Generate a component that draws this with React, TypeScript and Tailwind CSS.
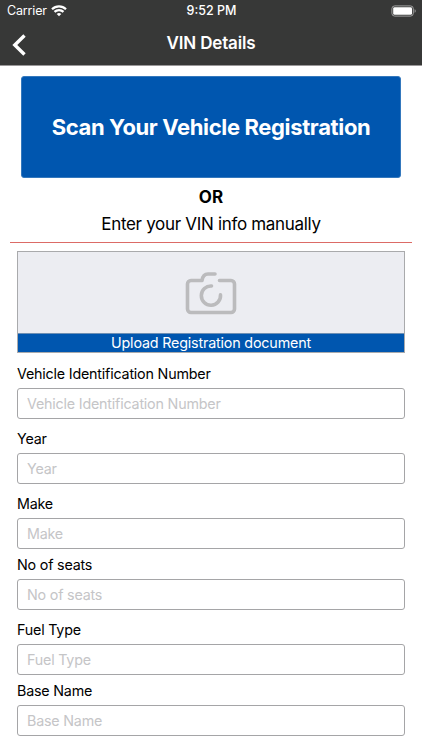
import React, { useState } from "react";
import clsx from "clsx";

type Field = {
    label: string;
    className: string;
};

const fields: Field[] = [
    { label: "Vehicle Identification Number", className: "mt-3" },
    { label: "Year", className: "mt-[11px]" },
    { label: "Make", className: "mt-[11px]" },
    { label: "No of seats", className: "mt-[7px]" },
    { label: "Fuel Type", className: "mt-[11px]" },
    { label: "Base Name", className: "mt-[7px]" },
];

function StatusBar() {
    return (
        <div className="grid h-[22px] grid-cols-3 items-center pr-[5px] pl-[7px] text-[12.5px] leading-4">
            <div className="flex items-center gap-1">
                <span className="-tracking-[0.15px]">Carrier</span>
                <svg width="16" height="12" viewBox="0 0 16 12" fill="none" stroke="currentColor" strokeWidth="2.200">
                    <path d="M1 4.2a10 10 0 0 1 14 0" />
                    <path d="M3.5 6.9a6.4 6.4 0 0 1 9 0" />
                    <path d="M8 11.3 5.7 9a3.3 3.3 0 0 1 4.600 0Z" fill="currentColor" stroke="none" />
                </svg>
            </div>
            <span className="pr-px text-center font-medium">9:52 PM</span>
            <div className="flex justify-end">
                <svg width="26" height="12" viewBox="0 0 26 12" fill="none">
                    <rect x="0.9" y="0.9" width="21.4" height="10.2" rx="2.8" stroke="#a0a0a0" />
                    <rect x="2.2" y="2.200" width="18.8" height="7.6" rx="1.4" fill="white" />
                    <path d="M23.6 4.2v3.6c.7-.3 1.1-1 1.1-1.8s-.4-1.5-1.1-1.8Z" fill="#a0a0a0" />
                </svg>
            </div>
        </div>
    );
}

function FormField({ label, className }: Field) {
    const [value, setValue] = useState("");

    return (
        <label className={clsx("flex flex-col gap-[5px]", className)}>
            <span className="text-[14.3px] leading-[18px] -tracking-[0.2px]">{label}</span>
            <input
                value={value}
                onChange={(e) => setValue(e.target.value)}
                placeholder={label}
                className="h-[31px] w-full rounded-[3px] border border-[#a5a5a7] bg-white px-[9px] text-[14.3px] -tracking-[0.2px] outline-none placeholder:text-[#c5c5c7]"
            />
        </label>
    );
}

export default function App() {
    return (
        <div className="h-[750px] overflow-hidden bg-white font-[Inter,sans-serif] text-black">
            <header className="h-[66px] border-b border-[#9a9899] bg-[#373837] text-white">
                <StatusBar />
                <div className="grid h-[43px] grid-cols-3 items-center">
                    <button type="button" aria-label="Back" className="pt-0.5 pl-3">
                        <svg width="15" height="22" viewBox="0 0 15 22" fill="none" stroke="currentColor" strokeWidth="3.4">
                            <path d="M12.500 1.500 2.800 11l9.700 9.500" />
                        </svg>
                    </button>
                    <h1 className="text-center text-[17px] font-semibold -tracking-[0.15px]">VIN Details</h1>
                </div>
            </header>
            <main>
                <button
                    type="button"
                    className="ml-[21px] mt-[10px] flex h-[102px] w-[380px] items-center justify-center rounded-[3px] border border-[#3478bd] bg-[#0056af] text-[22px] font-bold -tracking-[0.36px] whitespace-nowrap text-white"
                >
                    Scan Your Vehicle Registration
                </button>
                <div className="mx-[10px] h-[65px] border-b border-[#dc6b66] pt-[7px] text-center">
                    <p className="text-[17px] leading-6 font-bold">OR</p>
                    <p className="mt-[3px] text-[17px] leading-6 -tracking-[0.31px]">Enter your VIN info manually</p>
                </div>
                <form className="px-[17px]">
                    <button type="button" className="mt-2 block h-[102px] w-full border border-[#a9aaac] bg-[#ecedf2]">
                        <span className="flex h-[81px] items-center justify-center">
                            <svg
                                width="52"
                                height="44"
                                viewBox="0 0 52 44"
                                fill="none"
                                stroke="#bbbbbd"
                                strokeWidth="3.6"
                                strokeLinecap="round"
                                strokeLinejoin="round"
                            >
                                <path d="M34.500 9.500H46a3.500 3.500 0 0 1 3.500 3.500v25a3.500 3.500 0 0 1-3.500 3.500H6A3.500 3.500 0 0 1 2.500 38V13A3.500 3.500 0 0 1 6 9.500h11q1-6.500 6-6.500h7" />
                                <path d="M26.500 15a9.600 9.600 0 1 0 9 8.800" />
                            </svg>
                        </span>
                        <span className="block h-[19px] border-t border-[#6d8fb4] bg-[#0056af] text-[14.3px] leading-[18px] -tracking-[0.17px] text-white">
                            Upload Registration document
                        </span>
                    </button>
                    {fields.map((field) => (
                        <FormField key={field.label} {...field} />
                    ))}
                </form>
            </main>
        </div>
    );
}
